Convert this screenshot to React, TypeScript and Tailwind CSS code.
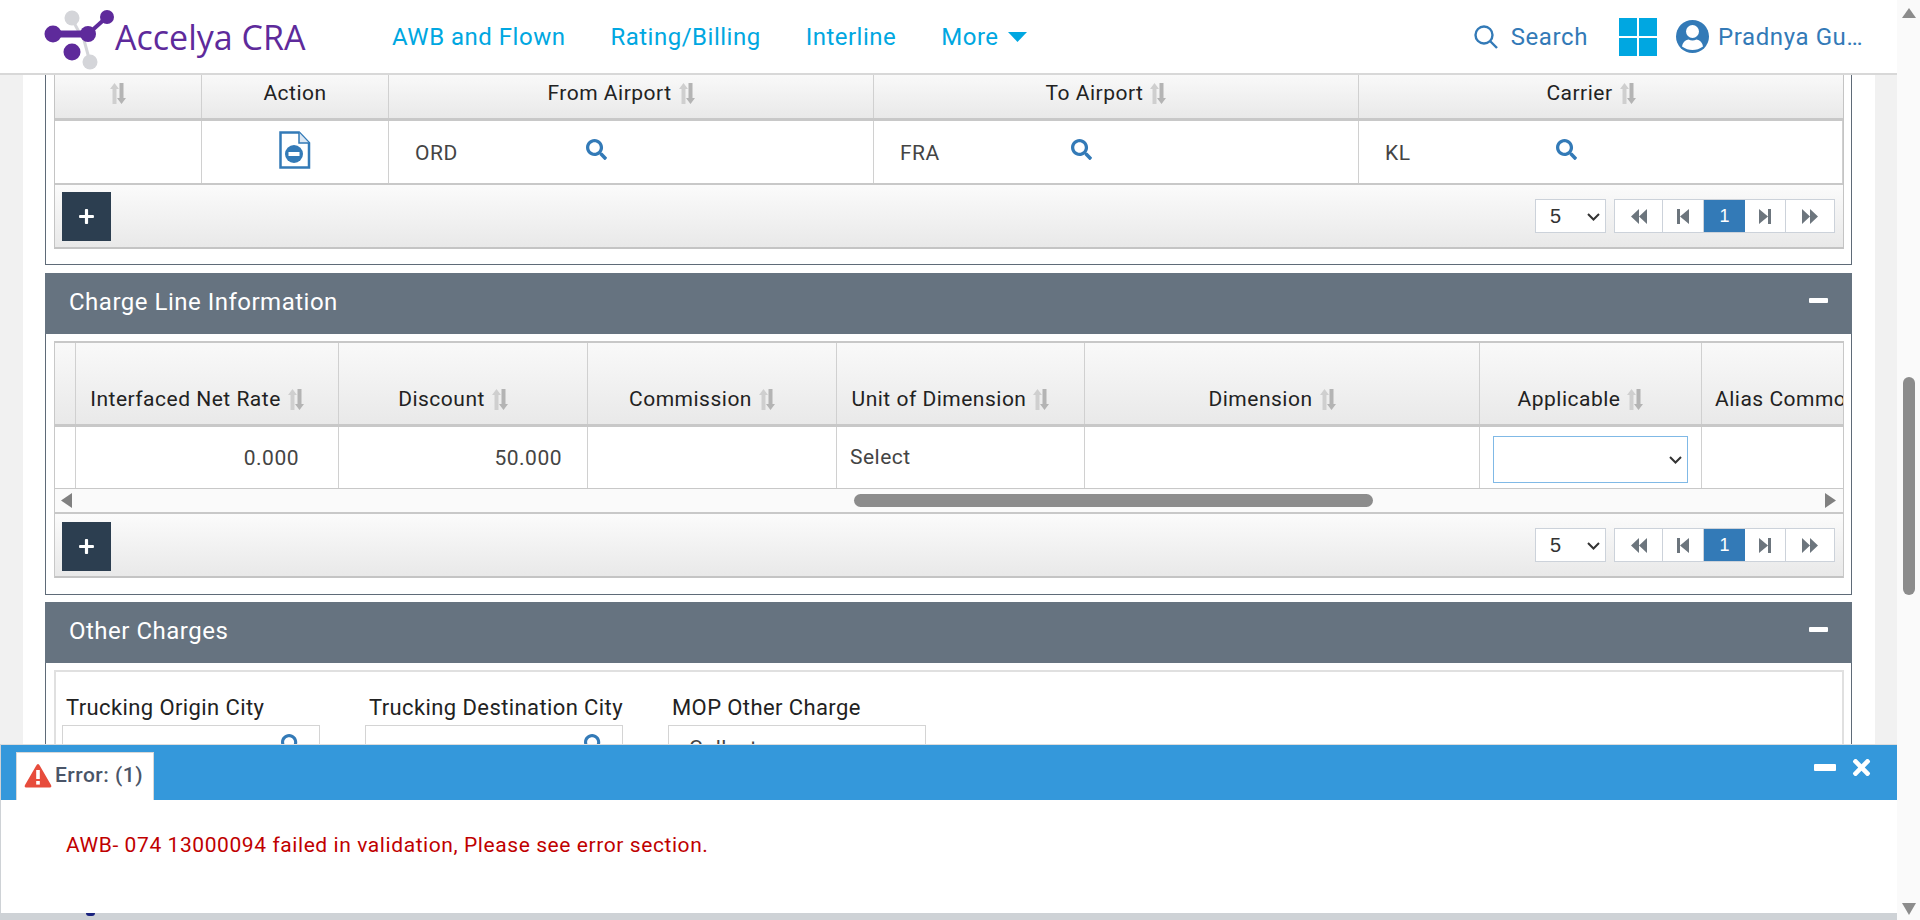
import type { ReactNode } from 'react';
import { FaSearch, FaPlus, FaTimes } from 'react-icons/fa';

const navItems = ['AWB and Flown', 'Rating/Billing', 'Interline'];

function SortIcon({ className = '' }: { className?: string }) {
  return (
    <svg width="16" height="21" viewBox="0 0 16 21" className={`shrink-0 ${className}`}>
      <path d="M4.5 0 L9 6 H6.5 V21 H2.5 V6 H0 Z" fill="#cfcfcf" />
      <path d="M11.5 21 L7 15 H9.5 V0 H13.5 V15 H16 Z" fill="#b4b4b4" />
    </svg>
  );
}

function FileMinusIcon() {
  return (
    <svg width="32" height="38" viewBox="0 0 32 38">
      <path d="M1.5 1.5 H20 L30 12 V36.5 H1.5 Z" fill="#fff" stroke="#337ab7" strokeWidth="2.5" />
      <path d="M20 1.5 V12 H30" fill="#dbe7f3" stroke="#337ab7" strokeWidth="1.5" />
      <circle cx="15" cy="23" r="9" fill="#337ab7" />
      <rect x="9.5" y="21" width="11" height="4" fill="#fff" />
    </svg>
  );
}

function Chevron({ className }: { className: string }) {
  return (
    <svg
      width="13"
      height="8"
      viewBox="0 0 13 8"
      fill="none"
      stroke="#333"
      strokeWidth="2"
      className={`absolute pointer-events-none ${className}`}
    >
      <path d="M1 1 L6.5 6.5 L12 1" />
    </svg>
  );
}

function MinusBar({ className }: { className: string }) {
  return <div className={`bg-white rounded-[1px] ${className}`} />;
}

function Pager() {
  return (
    <div className="flex items-center gap-2">
      <div className="relative">
        <select
          defaultValue="5"
          className="block appearance-none h-[34px] w-[71px] bg-white border border-[#ccd2da] pl-[14px] text-[20px] tracking-normal text-[#333] font-['Liberation_Sans',sans-serif]"
        >
          <option value="5">5</option>
        </select>
        <Chevron className="right-[6px] top-[14px]" />
      </div>
      <div className="flex h-[34px] w-[221px] bg-white border border-[#ccd2da]">
        <div className="w-[48px] flex items-center justify-center border-r border-[#ccd2da]">
          <svg width="16" height="15" viewBox="0 0 16 15">
            <path d="M8 0 V15 L0 7.5 Z M16 0 V15 L8 7.5 Z" fill="#6c757d" />
          </svg>
        </div>
        <div className="w-[41px] flex items-center justify-center border-r border-[#ccd2da]">
          <svg width="12" height="15" viewBox="0 0 12 15">
            <path d="M0 0 H3 V15 H0 Z M12 0 V15 L3 7.5 Z" fill="#6c757d" />
          </svg>
        </div>
        <div className="w-[41px] flex items-center justify-center bg-[#337ab7] text-white text-[18px] tracking-normal font-['Liberation_Sans',sans-serif]">
          1
        </div>
        <div className="w-[41px] flex items-center justify-center border-r border-[#ccd2da]">
          <svg width="12" height="15" viewBox="0 0 12 15">
            <path d="M12 0 H9 V15 H12 Z M0 0 V15 L9 7.5 Z" fill="#6c757d" />
          </svg>
        </div>
        <div className="flex-1 flex items-center justify-center">
          <svg width="16" height="15" viewBox="0 0 16 15">
            <path d="M0 0 V15 L8 7.5 Z M8 0 V15 L16 7.5 Z" fill="#6c757d" />
          </svg>
        </div>
      </div>
    </div>
  );
}

function TableFooter({ className, pagerClass }: { className: string; pagerClass: string }) {
  return (
    <div
      className={`flex justify-between pl-[7px] pr-[8px] border-b-2 border-[#c4c4c4] bg-gradient-to-b from-[#fbfbfb] to-[#e9e9e9] ${className}`}
    >
      <div className="w-[49px] h-[49px] bg-[#2c3e50] flex items-center justify-center text-white">
        <FaPlus size={17} />
      </div>
      <div className={pagerClass}>
        <Pager />
      </div>
    </div>
  );
}

function HeadCell({
  label,
  sort = true,
  className = '',
}: {
  label?: string;
  sort?: boolean;
  className?: string;
}) {
  return (
    <div
      className={`flex items-start justify-center gap-[7px] border-r border-[#d0d0d0] whitespace-nowrap ${sort ? 'pr-5' : ''} ${className}`}
    >
      {label && <span>{label}</span>}
      {sort && <SortIcon className="mt-[5px]" />}
    </div>
  );
}

function LookupCell({ value }: { value: string }) {
  return (
    <div className="flex pl-[26px] border-r border-[#d0d0d0] text-[#444]">
      <span className="w-[171px] pt-[17px]">{value}</span>
      <FaSearch size={21} color="#337ab7" className="mt-[18px]" />
    </div>
  );
}

function SectionHeader({ title }: { title: string }) {
  return (
    <div className="h-[61px] bg-[#667380] flex items-center justify-between px-[24px] text-white text-[24px]">
      <span className="mb-[3px]">{title}</span>
      <MinusBar className="w-[19px] h-[5px] mb-[6px]" />
    </div>
  );
}

function AirportPanel() {
  return (
    <div className="border-x border-b border-[#5f6b78] pl-[8px] pr-[7px] pb-[15px] mb-[8px]">
      <div className="border-x border-[#c4c4c4]">
        <div className="h-[46px] grid grid-cols-[147px_187px_485px_485px_1fr] border-b-[3px] border-[#c8c8c8] bg-gradient-to-b from-[#f9f9f9] to-[#e9e9e9] text-[#222]">
          <HeadCell className="pt-[3px]" />
          <HeadCell label="Action" sort={false} className="pt-[3px]" />
          <HeadCell label="From Airport" className="pt-[3px]" />
          <HeadCell label="To Airport" className="pt-[3px]" />
          <HeadCell label="Carrier" className="pt-[3px] border-r-0" />
        </div>
        <div className="h-[64px] grid grid-cols-[147px_187px_485px_485px_1fr] border-b-2 border-[#c8c8c8] bg-white">
          <div className="border-r border-[#d0d0d0]" />
          <div className="border-r border-[#d0d0d0] flex justify-center pt-[10px]">
            <FileMinusIcon />
          </div>
          <LookupCell value="ORD" />
          <LookupCell value="FRA" />
          <LookupCell value="KL" />
        </div>
        <TableFooter className="h-[64px] pt-[7px]" pagerClass="pt-[7px]" />
      </div>
    </div>
  );
}

function ChargeLinePanel() {
  return (
    <div className="mb-[7px]">
      <SectionHeader title="Charge Line Information" />
      <div className="border-x border-b border-[#5f6b78] pl-[8px] pr-[7px] pt-[7px] pb-[16px]">
        <div className="border-x border-t-2 border-[#c8c8c8]">
          <div className="h-[84px] grid grid-cols-[21px_263px_249px_249px_248px_395px_222px_1fr] border-b-[3px] border-[#c8c8c8] bg-gradient-to-b from-[#f9f9f9] to-[#e9e9e9] text-[#222] overflow-hidden">
            <HeadCell sort={false} />
            <HeadCell label="Interfaced Net Rate" className="pt-[41px]" />
            <HeadCell label="Discount" className="pt-[41px]" />
            <HeadCell label="Commission" className="pt-[41px]" />
            <HeadCell label="Unit of Dimension" className="pt-[41px]" />
            <HeadCell label="Dimension" className="pt-[41px]" />
            <HeadCell label="Applicable" className="pt-[41px]" />
            <div className="pt-[41px] pl-[13px] whitespace-nowrap">Alias Commodity</div>
          </div>
          <div className="h-[62px] grid grid-cols-[21px_263px_249px_249px_248px_395px_222px_1fr] border-b border-[#c8c8c8] bg-white text-[#444]">
            <div className="border-r border-[#d0d0d0]" />
            <div className="border-r border-[#d0d0d0] text-right pr-[39px] pt-[16px]">0.000</div>
            <div className="border-r border-[#d0d0d0] text-right pr-[25px] pt-[16px]">50.000</div>
            <div className="border-r border-[#d0d0d0]" />
            <div className="border-r border-[#d0d0d0] pl-[13px] pt-[15px]">Select</div>
            <div className="border-r border-[#d0d0d0]" />
            <div className="border-r border-[#d0d0d0] pl-[13px] pt-[9px]">
              <div className="relative w-[195px]">
                <select className="block appearance-none w-[195px] h-[47px] bg-white border border-[#80b9e6]">
                  <option />
                </select>
                <Chevron className="right-[6px] top-[20px]" />
              </div>
            </div>
            <div />
          </div>
          <div className="h-[25px] flex items-center border-b-2 border-[#c8c8c8] bg-[#fafafa] pl-[6px] pr-[7px]">
            <svg width="11" height="15" viewBox="0 0 11 15">
              <path d="M11 0 V15 L0 7.5 Z" fill="#808080" />
            </svg>
            <div className="ml-[782px] w-[519px] h-[13px] rounded-full bg-[#8c8c8c]" />
            <svg width="11" height="15" viewBox="0 0 11 15" className="ml-auto">
              <path d="M0 0 V15 L11 7.5 Z" fill="#808080" />
            </svg>
          </div>
          <TableFooter className="h-[64px] pt-[8px]" pagerClass="pt-[6px]" />
        </div>
      </div>
    </div>
  );
}

function OtherField({ label, children }: { label: string; children?: ReactNode }) {
  return (
    <div className="w-[258px]">
      <div className="pl-[4px] h-[33px] leading-[32px] text-[22px] tracking-[0.4px] text-[#222] whitespace-nowrap">
        {label}
      </div>
      <div className="h-[60px] border border-[#d4d4d4] flex justify-end pr-[18px] pt-[8px] text-[#444]">
        {children}
      </div>
    </div>
  );
}

function OtherChargesPanel() {
  return (
    <div>
      <SectionHeader title="Other Charges" />
      <div className="border-x border-[#5f6b78] pl-[8px] pr-[7px] pt-[7px] h-[300px]">
        <div className="border-2 border-[#e0e0e0] h-full pl-[6px] pt-[20px] flex gap-[45px]">
          <OtherField label="Trucking Origin City">
            <FaSearch size={20} color="#337ab7" />
          </OtherField>
          <OtherField label="Trucking Destination City">
            <FaSearch size={20} color="#337ab7" />
          </OtherField>
          <OtherField label="MOP Other Charge">
            <span className="w-full pl-[20px] -mt-[1px]">Collect</span>
          </OtherField>
        </div>
      </div>
    </div>
  );
}

function TopBar() {
  return (
    <div className="h-[75px] shrink-0 bg-white border-b-2 border-[#d8d8d8] flex items-center relative z-10">
      <div className="w-[392px] pl-[43px] flex items-center shrink-0">
        <svg width="74" height="70" viewBox="0 0 74 70" className="shrink-0">
          <path d="M29 17 L36 30 M47 60 L41 38" stroke="#d4d5d9" strokeWidth="3" />
          <circle cx="29" cy="16" r="7.5" fill="#d4d5d9" />
          <circle cx="47" cy="60" r="7.5" fill="#d4d5d9" />
          <path d="M10 32 H45" stroke="#5e2a9b" strokeWidth="7" />
          <path d="M45 32 L64 15" stroke="#5e2a9b" strokeWidth="4" />
          <circle cx="10" cy="32" r="8.5" fill="#5e2a9b" />
          <circle cx="45" cy="32" r="8" fill="#5e2a9b" />
          <circle cx="64" cy="15" r="7" fill="#5e2a9b" />
          <circle cx="29" cy="50" r="8.5" fill="#5e2a9b" />
        </svg>
        <span className="text-[34px] text-[#5e2a9b] tracking-normal font-['Open_Sans',sans-serif] whitespace-nowrap -ml-[2px] mt-[2px]">
          Accelya CRA
        </span>
      </div>
      <div className="flex items-center gap-[45px] text-[#00a7e1] text-[24px] tracking-[0.5px]">
        {navItems.map((item) => (
          <span key={item}>{item}</span>
        ))}
        <span className="flex items-center gap-[9px]">
          More
          <svg width="19" height="10" viewBox="0 0 19 10">
            <path d="M0 0 H19 L9.5 10 Z" fill="#00a7e1" />
          </svg>
        </span>
      </div>
      <div className="ml-auto flex items-center text-[#337ab7] text-[24px] tracking-[0.6px] pr-[37px]">
        <svg width="24" height="24" viewBox="0 0 24 24" fill="none" stroke="#337ab7" strokeWidth="2.4">
          <circle cx="10" cy="10" r="8.5" />
          <path d="M16 16 L23 23" />
        </svg>
        <span className="ml-[13px]">Search</span>
        <svg width="38" height="38" viewBox="0 0 38 38" className="ml-[31px]">
          <rect x="0" y="0" width="18" height="18" fill="#00a7e1" />
          <rect x="20" y="0" width="18" height="18" fill="#00a7e1" />
          <rect x="0" y="20" width="18" height="18" fill="#00a7e1" />
          <rect x="20" y="20" width="18" height="18" fill="#00a7e1" />
        </svg>
        <svg width="33" height="33" viewBox="0 0 33 33" className="ml-[19px]">
          <circle cx="16.5" cy="16.5" r="16.5" fill="#337ab7" />
          <circle cx="16.5" cy="11.5" r="6.5" fill="#fff" />
          <path d="M6 26.5 Q7 20.5 12.5 19.5 Q16.5 21.5 20.5 19.5 Q26 20.5 27 26.5 Q22 30 16.5 30 Q11 30 6 26.5 Z" fill="#fff" />
        </svg>
        <span className="ml-[9px] w-[142px] whitespace-nowrap">Pradnya Gu…</span>
      </div>
    </div>
  );
}

function ErrorDock() {
  return (
    <div className="absolute left-0 top-[744px] bottom-0 w-[1897px] flex flex-col bg-[#ced2d6] z-20">
      <div className="h-[56px] shrink-0 ml-px bg-[#3498db] border-t border-[#dcdcdc] flex justify-between pl-[15px] pr-[23px]">
        <div className="mt-[7px] h-[48px] w-[138px] bg-white border-t border-x border-[#d8d8d8] flex items-center pl-[7px] pb-[2px] text-[#4a5568] font-medium text-[21px]">
          <svg width="28" height="25" viewBox="0 0 28 25" className="shrink-0">
            <path d="M14 1 Q15 1 16 3 L27 22 Q28 24 26 24.5 H2 Q0 24 1 22 L12 3 Q13 1 14 1 Z" fill="#e74c3c" />
            <rect x="12.2" y="7" width="3.6" height="9" fill="#fff" />
            <rect x="12.2" y="18" width="3.6" height="3.6" fill="#fff" />
          </svg>
          <span className="ml-[3px] whitespace-nowrap">Error: (1)</span>
        </div>
        <div className="flex items-center gap-[13px] text-white pb-[10px]">
          <MinusBar className="w-[22px] h-[7px]" />
          <FaTimes size={25} />
        </div>
      </div>
      <div className="h-[113px] shrink-0 ml-px bg-white pl-[65px] pt-[30px] text-[#c00000] tracking-[0.58px]">
        AWB- 074 13000094 failed in validation, Please see error section.
      </div>
      <div className="relative h-[7px]">
        <div className="absolute left-[86px] top-0 w-[9px] h-[3px] rounded-b-full bg-[#1a237e]" />
      </div>
    </div>
  );
}

export default function App() {
  return (
    <div className="relative h-screen w-full flex overflow-hidden bg-white font-['Roboto',sans-serif] text-[21px] tracking-[0.5px]">
      <div className="w-[1897px] shrink-0 flex flex-col">
        <TopBar />
        <div className="flex-1 min-h-0 flex overflow-hidden">
          <div className="w-[23px] shrink-0 bg-[#f1f1f1]" />
          <div className="w-[1852px] shrink-0 pl-[22px] pr-[23px]">
            <AirportPanel />
            <ChargeLinePanel />
            <OtherChargesPanel />
          </div>
          <div className="flex-1 bg-[#f1f1f1]" />
        </div>
      </div>
      <div className="flex-1 bg-[#fafafa] flex flex-col items-center pt-[8px]">
        <svg width="14" height="10" viewBox="0 0 14 10">
          <path d="M7 0 L14 10 H0 Z" fill="#8c8c8c" />
        </svg>
        <div className="mt-[359px] w-[12px] h-[218px] rounded-full bg-[#8c8c8c]" />
        <svg width="14" height="12" viewBox="0 0 14 12" className="mt-auto mb-[5px]">
          <path d="M0 0 H14 L7 12 Z" fill="#8c8c8c" />
        </svg>
      </div>
      <ErrorDock />
    </div>
  );
}
